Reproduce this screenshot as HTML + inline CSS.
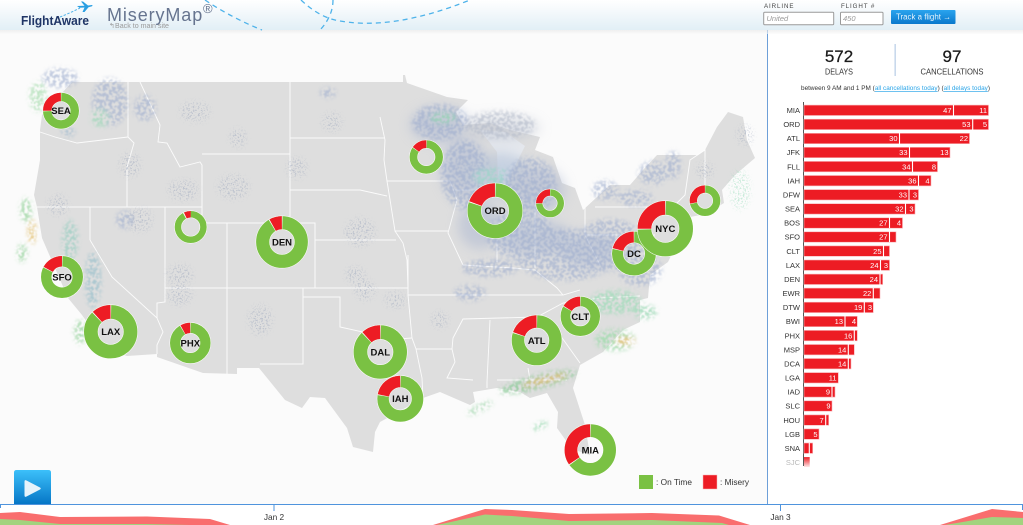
<!DOCTYPE html>
<html><head><meta charset="utf-8"><title>MiseryMap</title>
<style>
html,body{margin:0;padding:0;background:#fff;width:1023px;height:525px;overflow:hidden}
svg{display:block;font-family:"Liberation Sans",sans-serif}
.st{fill:none;stroke:#fff;stroke-width:.9;opacity:.9}
.d circle{fill:none}
.o{stroke:#fff}.g{stroke:#7ac143}.r{stroke:#ed1c24}.s{stroke:#fff}
.d text{font-size:9.5px;font-weight:700;fill:#111;text-anchor:middle}
.l{font-size:7.5px;fill:#333;text-anchor:end}
.v{font-size:7.5px;fill:#fff;text-anchor:end}
.b{fill:#ed1c24;stroke:#f9b5b8;stroke-width:.6}
.dv{stroke:#fff;stroke-width:1.1}
.arc{fill:none;stroke:#4fb3ea;stroke-width:1.3;stroke-dasharray:5 4}
</style></head><body>
<svg width="1023" height="525" viewBox="0 0 1023 525" xmlns="http://www.w3.org/2000/svg">
<defs>
<linearGradient id="hd" x1="0" y1="0" x2="0" y2="1"><stop offset="0" stop-color="#fff"/><stop offset="1" stop-color="#e2eff6"/></linearGradient>
<linearGradient id="sh" x1="0" y1="0" x2="0" y2="1"><stop offset="0" stop-color="#e8e8e8"/><stop offset="1" stop-color="#fbfbfb"/></linearGradient>
<linearGradient id="pl" x1="0" y1="0" x2="0" y2="1"><stop offset="0" stop-color="#3cc0fa"/><stop offset="1" stop-color="#0676c6"/></linearGradient>
<linearGradient id="btn" x1="0" y1="0" x2="0" y2="1"><stop offset="0" stop-color="#2aa4ee"/><stop offset="1" stop-color="#0a78cc"/></linearGradient>
<linearGradient id="fade" x1="0" y1="0" x2="0" y2="1"><stop offset="0" stop-color="#ed1c24"/><stop offset="1" stop-color="#ed1c24" stop-opacity=".1"/></linearGradient>
<filter id="mot" x="-10%" y="-10%" width="120%" height="120%">
<feGaussianBlur in="SourceGraphic" stdDeviation="2.5" result="b"/>
<feTurbulence type="fractalNoise" baseFrequency=".32" numOctaves="3" seed="4" result="n"/>
<feColorMatrix in="n" type="matrix" values="0 0 0 0 0 0 0 0 0 0 0 0 0 0 0 0 0 0 7 -3" result="m"/>
<feComposite in="b" in2="m" operator="in" result="c"/>
<feGaussianBlur in="c" stdDeviation=".45"/>
</filter>
<filter id="spk" x="-10%" y="-10%" width="120%" height="120%">
<feGaussianBlur in="SourceGraphic" stdDeviation="3" result="b"/>
<feTurbulence type="fractalNoise" baseFrequency=".6" numOctaves="2" seed="9" result="n"/>
<feColorMatrix in="n" type="matrix" values="0 0 0 0 0 0 0 0 0 0 0 0 0 0 0 0 0 0 10 -5.4" result="m"/>
<feComposite in="b" in2="m" operator="in" result="c"/>
<feGaussianBlur in="c" stdDeviation=".35"/>
</filter>
<filter id="soft" x="-20%" y="-20%" width="140%" height="140%"><feGaussianBlur stdDeviation="6"/></filter>
</defs>

<rect width="1023" height="525" fill="#fff"/>
<rect x="0" y="30" width="767" height="474" fill="#fbfbfb"/>

<!-- US land -->
<path fill="#dedede" d="M72 82H403V75L405 75L407 83L447 97L468 100L456 112L463 125L490 123L510 130L540 137L535 150L553 157L562 183L575 188L583 210L610 185L630 185L643 170L657 155H698L705 150L717 127L728 112L743 117L747 140L755 158L735 175L722 190L724 203L706 214L690 217L681 235L668 262L650 275L648 298L640 300L640 322L623 330L603 352L580 365L573 388L585 425L590 455L575 450L567 442L557 428L558 412L547 393L530 398L520 392L497 388L473 392L475 402L470 405L440 392L423 398L380 422L375 432L373 452L353 447L347 428L325 398L310 397L302 408L285 400L259 368H237V374L203 373L157 357V354L127 356L107 350L82 315L68 298L55 268L42 238L37 207L34 195L40 160L40 130L42 115Z"/>
<!-- Great lakes pale wash -->
<path fill="#e6e9ee" d="M480 130L497 152L498 178L507 188L512 172L525 146L505 132Z"/>

<!-- states -->
<g class="st">
<path d="M40 132L55 137L77 143L128 137V82"/>
<path d="M128 137L134 143L127 167V207"/>
<path d="M140 82L160 125L158 142L167 143L180 167L200 162L202 165V207"/>
<path d="M202 154H290V82"/>
<path d="M290 154V223"/>
<path d="M290 138H385"/>
<path d="M290 190H360L387 196"/>
<path d="M202 223H315V288"/>
<path d="M315 240H396"/>
<path d="M37 207H202V223"/>
<path d="M90 207V240M90 240L112 277L157 318L163 332L157 345V354"/>
<path d="M165 207V302L157 303V318"/>
<path d="M165 288H408"/>
<path d="M227 223V374"/>
<path d="M303 288V364H260"/>
<path d="M303 297H340V327L363 332L385 340L412 338"/>
<path d="M408 255V295H563L580 290"/>
<path d="M408 295L412 338L416 349L422 378L423 398"/>
<path d="M416 349H452L455 362L447 378L473 380"/>
<path d="M452 349L453 338L463 319L537 317L563 303L600 298L640 296"/>
<path d="M490 320L487 382V388"/>
<path d="M528 368L530 380M497 380H567"/>
<path d="M560 335L580 363"/>
<path d="M380 117L385 140L384 160L387 181H450"/>
<path d="M387 181L395 231H448"/>
<path d="M395 231L403 243L407 260L408 288"/>
<path d="M450 181L457 200L448 233L463 265"/>
<path d="M455 190H495"/>
<path d="M497 240V262"/>
<path d="M463 265L513 268L535 270L557 288L563 295"/>
<path d="M535 205V268"/>
<path d="M585 207V235L600 265"/>
<path d="M595 207H673"/>
<path d="M585 235H655"/>
<path d="M673 207L685 195L690 160L705 150V190"/>
</g>

<!-- radar soft wash -->
<g filter="url(#soft)" opacity=".5">
<ellipse cx="440" cy="125" rx="30" ry="18" fill="#aab6d0"/>
<ellipse cx="500" cy="128" rx="40" ry="12" fill="#c2c8d4"/>
<ellipse cx="465" cy="170" rx="24" ry="30" fill="#aab6d0"/>
<ellipse cx="500" cy="175" rx="30" ry="22" fill="#a8bad4"/>
<ellipse cx="480" cy="225" rx="22" ry="24" fill="#aab6d0"/>
<ellipse cx="535" cy="190" rx="30" ry="24" fill="#aab6d0"/>
<ellipse cx="535" cy="238" rx="38" ry="18" fill="#a8b6d2"/>
<ellipse cx="590" cy="250" rx="32" ry="18" fill="#a8b6d2"/>
</g>
<g filter="url(#mot)" opacity=".6">
<ellipse cx="440" cy="122" rx="28" ry="18" fill="#9cacce"/>
<ellipse cx="443" cy="118" rx="13" ry="6" fill="#86d4a8"/>
<ellipse cx="500" cy="125" rx="35" ry="14" fill="#b0b8c8"/>
<ellipse cx="465" cy="175" rx="24" ry="35" fill="#9cacce"/>
<ellipse cx="493" cy="177" rx="20" ry="9" fill="#8fd8c4"/>
<ellipse cx="530" cy="185" rx="26" ry="28" fill="#9cacce"/>
<ellipse cx="520" cy="235" rx="34" ry="24" fill="#9cacce"/>
<ellipse cx="565" cy="255" rx="50" ry="26" fill="#9cacce"/>
<ellipse cx="610" cy="245" rx="34" ry="26" fill="#9cacce"/>
<ellipse cx="640" cy="270" rx="22" ry="16" fill="#9cacce"/>
<ellipse cx="490" cy="268" rx="28" ry="9" fill="#9cacce"/>
<ellipse cx="470" cy="293" rx="16" ry="8" fill="#9cacce"/>
<ellipse cx="605" cy="190" rx="13" ry="10" fill="#9cacce"/>
<ellipse cx="653" cy="173" rx="15" ry="12" fill="#9cacce"/>
<ellipse cx="673" cy="165" rx="8" ry="14" fill="#9cacce"/>
<ellipse cx="635" cy="198" rx="18" ry="8" fill="#9cacce"/>
<ellipse cx="60" cy="78" rx="18" ry="10" fill="#9cacce"/>
<ellipse cx="38" cy="97" rx="9" ry="15" fill="#9cd8a4"/>
<ellipse cx="110" cy="102" rx="18" ry="24" fill="#9cacce"/>
<ellipse cx="100" cy="118" rx="9" ry="9" fill="#8fd6b0"/>
<ellipse cx="145" cy="108" rx="11" ry="13" fill="#9cacce"/>
<ellipse cx="68" cy="132" rx="7" ry="5" fill="#98b5cc"/>
<ellipse cx="328" cy="93" rx="8" ry="5" fill="#9cacce"/>
<ellipse cx="70" cy="240" rx="8" ry="20" fill="#8ccabc"/>
<ellipse cx="93" cy="280" rx="8" ry="28" fill="#8cbac8"/>
<ellipse cx="125" cy="220" rx="9" ry="9" fill="#9cacce"/>
</g>
<g filter="url(#mot)" opacity=".85">
<ellipse cx="615" cy="302" rx="26" ry="12" fill="#a4dcbc"/>
<ellipse cx="645" cy="312" rx="12" ry="7" fill="#a4dcbc"/>
<ellipse cx="615" cy="340" rx="20" ry="11" fill="#a4dcb0"/>
<ellipse cx="625" cy="341" rx="10" ry="4" fill="#e4bd6e"/>
<ellipse cx="538" cy="382" rx="40" ry="7" fill="#90cc9c" transform="rotate(-14 538 382)"/>
<ellipse cx="545" cy="380" rx="24" ry="3" fill="#e4b866" transform="rotate(-14 545 380)"/>
<ellipse cx="480" cy="408" rx="14" ry="3.5" fill="#a4d8b0" transform="rotate(-25 480 408)"/>
<ellipse cx="540" cy="426" rx="8" ry="3" fill="#8ed6a8" transform="rotate(-25 540 426)"/>
<ellipse cx="26" cy="210" rx="6" ry="12" fill="#a3d8a8"/>
<ellipse cx="32" cy="232" rx="4" ry="12" fill="#e2c070"/>
<ellipse cx="22" cy="253" rx="5" ry="9" fill="#a3d8a8"/>
<ellipse cx="80" cy="332" rx="6" ry="12" fill="#a3d8a8"/>
</g>
<!-- faint speck clusters -->
<g filter="url(#spk)" opacity=".45" fill="#9aa5bc">
<ellipse cx="195" cy="112" rx="15" ry="10"/><ellipse cx="238" cy="138" rx="8" ry="9"/><ellipse cx="233" cy="187" rx="16" ry="12"/>
<ellipse cx="332" cy="122" rx="10" ry="9"/><ellipse cx="297" cy="168" rx="10" ry="10"/><ellipse cx="360" cy="232" rx="15" ry="14"/>
<ellipse cx="183" cy="190" rx="15" ry="10"/><ellipse cx="58" cy="205" rx="10" ry="10"/><ellipse cx="260" cy="320" rx="12" ry="15"/>
<ellipse cx="180" cy="295" rx="12" ry="10"/><ellipse cx="365" cy="290" rx="10" ry="10"/><ellipse cx="395" cy="300" rx="10" ry="8"/>
<ellipse cx="355" cy="275" rx="10" ry="8"/><ellipse cx="440" cy="320" rx="8" ry="8"/><ellipse cx="745" cy="135" rx="8" ry="10"/>
<ellipse cx="705" cy="170" rx="8" ry="8"/><ellipse cx="740" cy="190" rx="10" ry="20" fill="#8ed8b4"/>
<ellipse cx="140" cy="220" rx="12" ry="12"/><ellipse cx="180" cy="275" rx="13" ry="10"/><ellipse cx="130" cy="165" rx="10" ry="12"/>
</g>

<!-- donuts: outline, green, separator, red -->
<g class="d">
<g transform="translate(61,110.7)"><circle r="13.75" class="o" stroke-width="9.5"/><circle r="13.75" class="g" stroke-width="8.5"/><circle r="13.75" class="s" stroke-width="8.5" pathLength="100" stroke-dasharray="26 100" transform="rotate(-182)"/><circle r="13.75" class="r" stroke-width="8.5" pathLength="100" stroke-dasharray="25 100" transform="rotate(-180)"/><text y="3.5">SEA</text></g>
<g transform="translate(190.7,227)"><circle r="12.75" class="o" stroke-width="7.5"/><circle r="12.75" class="g" stroke-width="6.5"/><circle r="12.75" class="s" stroke-width="6.5" pathLength="100" stroke-dasharray="8 100" transform="rotate(-119)"/><circle r="12.75" class="r" stroke-width="6.5" pathLength="100" stroke-dasharray="7 100" transform="rotate(-115)"/></g>
<g transform="translate(282,242)"><circle r="19.3" class="o" stroke-width="14.2"/><circle r="19.3" class="g" stroke-width="13.2"/><circle r="19.3" class="s" stroke-width="13.2" pathLength="100" stroke-dasharray="9 100" transform="rotate(-121)"/><circle r="19.3" class="r" stroke-width="13.2" pathLength="100" stroke-dasharray="8 100" transform="rotate(-119)"/><text y="3.5">DEN</text></g>
<g transform="translate(62,277)"><circle r="15.75" class="o" stroke-width="11.5"/><circle r="15.75" class="g" stroke-width="10.5"/><circle r="15.75" class="s" stroke-width="10.5" pathLength="100" stroke-dasharray="18 100" transform="rotate(-153)"/><circle r="15.75" class="r" stroke-width="10.5" pathLength="100" stroke-dasharray="17 100" transform="rotate(-151)"/><text y="3.5">SFO</text></g>
<g transform="translate(110.7,331.7)"><circle r="19.85" class="o" stroke-width="14.7"/><circle r="19.85" class="g" stroke-width="13.7"/><circle r="19.85" class="s" stroke-width="13.7" pathLength="100" stroke-dasharray="12.6 100" transform="rotate(-134)"/><circle r="19.85" class="r" stroke-width="13.7" pathLength="100" stroke-dasharray="11.6 100" transform="rotate(-132)"/><text y="3.5">LAX</text></g>
<g transform="translate(190.3,343)"><circle r="15.15" class="o" stroke-width="11.3"/><circle r="15.15" class="g" stroke-width="10.3"/><circle r="15.15" class="s" stroke-width="10.3" pathLength="100" stroke-dasharray="9 100" transform="rotate(-121)"/><circle r="15.15" class="r" stroke-width="10.3" pathLength="100" stroke-dasharray="8 100" transform="rotate(-119)"/><text y="3.5">PHX</text></g>
<g transform="translate(426.3,157)"><circle r="12.85" class="o" stroke-width="8.7"/><circle r="12.85" class="g" stroke-width="7.7"/><circle r="12.85" class="s" stroke-width="7.7" pathLength="100" stroke-dasharray="16 100" transform="rotate(-146)"/><circle r="12.85" class="r" stroke-width="7.7" pathLength="100" stroke-dasharray="15 100" transform="rotate(-144)"/></g>
<g transform="translate(495,210.7)"><circle r="20.75" class="o" stroke-width="14.5"/><circle r="20.75" class="g" stroke-width="13.5"/><circle r="20.75" class="s" stroke-width="13.5" pathLength="100" stroke-dasharray="20.5 100" transform="rotate(-162)"/><circle r="20.75" class="r" stroke-width="13.5" pathLength="100" stroke-dasharray="19.5 100" transform="rotate(-160)"/><text y="3.5">ORD</text></g>
<g transform="translate(550,203.3)"><circle r="10.75" class="o" stroke-width="7.5"/><circle r="10.75" class="g" stroke-width="6.5"/><circle r="10.75" class="s" stroke-width="6.5" pathLength="100" stroke-dasharray="26 100" transform="rotate(-182)"/><circle r="10.75" class="r" stroke-width="6.5" pathLength="100" stroke-dasharray="25 100" transform="rotate(-180)"/></g>
<g transform="translate(705,200.7)"><circle r="11.65" class="o" stroke-width="8.3"/><circle r="11.65" class="g" stroke-width="7.3"/><circle r="11.65" class="s" stroke-width="7.3" pathLength="100" stroke-dasharray="29 100" transform="rotate(-193)"/><circle r="11.65" class="r" stroke-width="7.3" pathLength="100" stroke-dasharray="28 100" transform="rotate(-191)"/></g>
<g transform="translate(634,253.5)"><circle r="16.5" class="o" stroke-width="12"/><circle r="16.5" class="g" stroke-width="11"/><circle r="16.5" class="s" stroke-width="11" pathLength="100" stroke-dasharray="22 100" transform="rotate(-168)"/><circle r="16.5" class="r" stroke-width="11" pathLength="100" stroke-dasharray="21 100" transform="rotate(-166)"/><text y="3.5">DC</text></g>
<g transform="translate(665.3,228.7)"><circle r="20.85" class="o" stroke-width="14.7"/><circle r="20.85" class="g" stroke-width="13.7"/><circle r="20.85" class="s" stroke-width="13.7" pathLength="100" stroke-dasharray="26 100" transform="rotate(-182)"/><circle r="20.85" class="r" stroke-width="13.7" pathLength="100" stroke-dasharray="25 100" transform="rotate(-180)"/><text y="3.5">NYC</text></g>
<g transform="translate(380.3,352)"><circle r="19.85" class="o" stroke-width="14.7"/><circle r="19.85" class="g" stroke-width="13.7"/><circle r="19.85" class="s" stroke-width="13.7" pathLength="100" stroke-dasharray="12.7 100" transform="rotate(-134)"/><circle r="19.85" class="r" stroke-width="13.7" pathLength="100" stroke-dasharray="11.7 100" transform="rotate(-132)"/><text y="3.5">DAL</text></g>
<g transform="translate(400.3,398.7)"><circle r="17.25" class="o" stroke-width="12.5"/><circle r="17.25" class="g" stroke-width="11.5"/><circle r="17.25" class="s" stroke-width="11.5" pathLength="100" stroke-dasharray="23 100" transform="rotate(-171)"/><circle r="17.25" class="r" stroke-width="11.5" pathLength="100" stroke-dasharray="22 100" transform="rotate(-169)"/><text y="3.5">IAH</text></g>
<g transform="translate(536.7,340.3)"><circle r="18.75" class="o" stroke-width="13.5"/><circle r="18.75" class="g" stroke-width="12.5"/><circle r="18.75" class="s" stroke-width="12.5" pathLength="100" stroke-dasharray="20.7 100" transform="rotate(-163)"/><circle r="18.75" class="r" stroke-width="12.5" pathLength="100" stroke-dasharray="19.7 100" transform="rotate(-161)"/><text y="3.5">ATL</text></g>
<g transform="translate(580.3,316.3)"><circle r="14.85" class="o" stroke-width="10.7"/><circle r="14.85" class="g" stroke-width="9.7"/><circle r="14.85" class="s" stroke-width="9.7" pathLength="100" stroke-dasharray="17 100" transform="rotate(-150)"/><circle r="14.85" class="r" stroke-width="9.7" pathLength="100" stroke-dasharray="16 100" transform="rotate(-148)"/><text y="3.5">CLT</text></g>
<g transform="translate(590.3,450)"><circle r="19.35" class="o" stroke-width="13.7"/><circle r="19.35" class="g" stroke-width="12.7"/><circle r="19.35" class="s" stroke-width="12.7" pathLength="100" stroke-dasharray="35.5 100" transform="rotate(-216)"/><circle r="19.35" class="r" stroke-width="12.7" pathLength="100" stroke-dasharray="34.5 100" transform="rotate(-214)"/><text y="3.5">MIA</text></g>
</g>

<!-- legend -->
<rect x="639" y="475" width="14" height="14" fill="#7ac143"/>
<text x="656" y="485" font-size="8.3" fill="#333">: On Time</text>
<rect x="703" y="475" width="14" height="14" fill="#ed1c24" stroke="#f9b5b8" stroke-width=".5"/>
<text x="720" y="485" font-size="8.3" fill="#333">: Misery</text>

<!-- right panel -->
<rect x="768" y="30" width="255" height="474" fill="#fff"/>
<rect x="767" y="30" width="1" height="474" fill="#6d9fd8"/>
<text x="839" y="62" font-size="17" fill="#1a1a1a" stroke="#1a1a1a" stroke-width=".25" text-anchor="middle">572</text>
<text x="839" y="74.5" font-size="8.5" fill="#333" text-anchor="middle" textLength="28" lengthAdjust="spacingAndGlyphs">DELAYS</text>
<rect x="894.5" y="44" width="1.3" height="32" fill="#bcd0e8"/>
<text x="952" y="62" font-size="17" fill="#1a1a1a" stroke="#1a1a1a" stroke-width=".25" text-anchor="middle">97</text>
<text x="952" y="74.5" font-size="8.5" fill="#333" text-anchor="middle" textLength="63" lengthAdjust="spacingAndGlyphs">CANCELLATIONS</text>
<text x="801" y="90" font-size="6.8" fill="#333" textLength="189" lengthAdjust="spacingAndGlyphs">between 9 AM and 1 PM (<tspan fill="#2ba5e8" text-decoration="underline">all cancellations today</tspan>) (<tspan fill="#2ba5e8" text-decoration="underline">all delays today</tspan>)</text>

<!-- bars -->
<rect x="803" y="102" width="1" height="364" fill="#555"/>
<g class="l">
<text x="800" y="113">MIA</text><text x="800" y="127.1">ORD</text><text x="800" y="141.2">ATL</text><text x="800" y="155.2">JFK</text><text x="800" y="169.3">FLL</text><text x="800" y="183.4">IAH</text><text x="800" y="197.5">DFW</text><text x="800" y="211.6">SEA</text><text x="800" y="225.7">BOS</text><text x="800" y="239.7">SFO</text><text x="800" y="253.8">CLT</text><text x="800" y="267.9">LAX</text><text x="800" y="282">DEN</text><text x="800" y="296">EWR</text><text x="800" y="310.1">DTW</text><text x="800" y="324.2">BWI</text><text x="800" y="338.3">PHX</text><text x="800" y="352.4">MSP</text><text x="800" y="366.4">DCA</text><text x="800" y="380.5">LGA</text><text x="800" y="394.6">IAD</text><text x="800" y="408.7">SLC</text><text x="800" y="422.8">HOU</text><text x="800" y="436.8">LGB</text><text x="800" y="450.9">SNA</text><text x="800" y="465" opacity=".35">SJC</text>
</g>
<g>
<rect class="b" x="804" y="105.1" width="184.5" height="10.4"/><rect class="b" x="804" y="119.2" width="184.5" height="10.4"/><rect class="b" x="804" y="133.3" width="165.5" height="10.4"/><rect class="b" x="804" y="147.3" width="146" height="10.4"/><rect class="b" x="804" y="161.4" width="133.5" height="10.4"/><rect class="b" x="804" y="175.5" width="127" height="10.4"/><rect class="b" x="804" y="189.6" width="114.5" height="10.4"/><rect class="b" x="804" y="203.7" width="111" height="10.4"/><rect class="b" x="804" y="217.8" width="98.5" height="10.4"/><rect class="b" x="804" y="231.8" width="92" height="10.4"/><rect class="b" x="804" y="245.9" width="85.5" height="10.4"/><rect class="b" x="804" y="260" width="85.5" height="10.4"/><rect class="b" x="804" y="274.1" width="78.7" height="10.4"/><rect class="b" x="804" y="288.1" width="76" height="10.4"/><rect class="b" x="804" y="302.2" width="69.3" height="10.4"/><rect class="b" x="804" y="316.3" width="53.3" height="10.4"/><rect class="b" x="804" y="330.4" width="53.3" height="10.4"/><rect class="b" x="804" y="344.5" width="50.3" height="10.4"/><rect class="b" x="804" y="358.5" width="47" height="10.4"/><rect class="b" x="804" y="372.6" width="34.3" height="10.4"/><rect class="b" x="804" y="386.7" width="31" height="10.4"/><rect class="b" x="804" y="400.8" width="28" height="10.4"/><rect class="b" x="804" y="414.9" width="24.7" height="10.4"/><rect class="b" x="804" y="428.9" width="15" height="10.4"/><rect class="b" x="804" y="443" width="8.7" height="10.4"/>
<rect x="804" y="457.1" width="5.7" height="10" fill="url(#fade)"/>
</g>
<g class="dv">
<path d="M953.5 105V116M972.7 119V130M899.5 133V144M909.5 147V158M912.5 161V172M918.5 175V186M909 189V200M905.5 203V214M889.5 217V228M889.5 231V242M883.5 245V257M880.5 260V271M880 274V285M873.3 288V299M864.3 302V313M845 316V327M854.3 330V341M848.3 344V355M848.3 358V369M832 386V397M825.7 414V426M809.3 443V454"/>
</g>
<g class="v">
<text x="951.5" y="113">47</text><text x="987" y="113">11</text>
<text x="970.5" y="127.1">53</text><text x="987" y="127.1">5</text>
<text x="897.5" y="141.2">30</text><text x="968" y="141.2">22</text>
<text x="907.5" y="155.2">33</text><text x="948.5" y="155.2">13</text>
<text x="910.5" y="169.3">34</text><text x="936" y="169.3">8</text>
<text x="916.5" y="183.4">36</text><text x="929.5" y="183.4">4</text>
<text x="907" y="197.5">33</text><text x="917" y="197.5">3</text>
<text x="903.5" y="211.6">32</text><text x="913.5" y="211.6">3</text>
<text x="887.5" y="225.7">27</text><text x="901" y="225.7">4</text>
<text x="887.5" y="239.7">27</text>
<text x="881.5" y="253.8">25</text>
<text x="878.5" y="267.9">24</text><text x="888" y="267.9">3</text>
<text x="878" y="282">24</text>
<text x="871.3" y="296">22</text>
<text x="862.3" y="310.1">19</text><text x="872" y="310.1">3</text>
<text x="843" y="324.2">13</text><text x="856" y="324.2">4</text>
<text x="852.3" y="338.3">16</text>
<text x="846.3" y="352.4">14</text>
<text x="846.3" y="366.4">14</text>
<text x="836.5" y="380.5">11</text>
<text x="830" y="394.6">9</text>
<text x="830.5" y="408.7">9</text>
<text x="823.7" y="422.8">7</text>
<text x="817.5" y="436.8">5</text>
</g>

<!-- timeline -->
<rect x="0" y="504" width="1023" height="21" fill="#fff"/>
<path fill="#f96e6e" d="M0 513L20 512L60 517L147 516.5L210 519L230 525H0ZM433 525L485 509L512 510L569 514L652 513L719 515.5L750 525ZM940 525L992 509L1023 512V525Z"/>
<path fill="#a2d37e" d="M0 519L20 520L60 524L147 524L190 525H0ZM437 525L485 514.5L512 516L569 521L652 520L722 523L729 525ZM945 525L992 517L1023 518V525Z"/>
<rect x="0" y="504" width="1023" height="1" fill="#4f94dd"/>
<path d="M.5 505V508M274 505V511M780.5 505V511M1022.5 505V510" stroke="#4f94dd" stroke-width="1" fill="none"/>
<text x="274" y="520" font-size="8.3" fill="#333" text-anchor="middle">Jan 2</text>
<text x="780.5" y="520" font-size="8.3" fill="#333" text-anchor="middle">Jan 3</text>

<!-- play -->
<path d="M14 504V472.5Q14 470 16.5 470H48.5Q51 470 51 472.5V504Z" fill="url(#pl)"/>
<path d="M24.5 481.5Q24.5 479.5 26.5 480.5L40 487.5Q41.5 488.5 40 489.5L26.5 496.5Q24.5 497.5 24.5 495.5Z" fill="#e6f3fb"/>

<!-- header -->
<rect x="0" y="30" width="1023" height="4" fill="url(#sh)" opacity=".6"/>
<rect x="0" y="0" width="1023" height="30" fill="url(#hd)"/>
<path class="arc" d="M205 0Q232 18 262 30"/>
<path class="arc" d="M301 0Q318 16 335 20Q390 32 470 0"/>
<path class="arc" d="M333 0Q333 16 320 30"/>
<path d="M60 17Q70 13 80 8" fill="none" stroke="#4fb3ea" stroke-width="1" stroke-dasharray="2.5 1.5"/>
<path d="M77 6L84.5 5.8L81 1.5H83L88 5.5L92 5Q93 5.5 92 6.2L88.5 7.2L84.5 12H82.5L84.5 7.5L79.5 7.8Z" fill="#2a9fe2"/>
<text x="21" y="25" font-size="12.6" font-weight="700" fill="#1f3566" textLength="68" lengthAdjust="spacingAndGlyphs">FlightAware</text>
<text x="107" y="21" font-size="18" fill="#66748f" letter-spacing=".9">MiseryMap</text>
<text x="203" y="13" font-size="13" fill="#66748f">®</text>
<text x="109" y="28" font-size="7.2" fill="#9a9a9a">↰</text><text x="115" y="28" font-size="7.2" fill="#9a9a9a" textLength="54" lengthAdjust="spacingAndGlyphs">Back to main site</text>

<text x="764" y="8" font-size="6.2" fill="#444" letter-spacing=".9">AIRLINE</text>
<text x="841" y="8" font-size="6.2" fill="#444" letter-spacing=".9">FLIGHT #</text>
<rect x="763.7" y="12.2" width="70" height="12.6" rx="1" fill="#fff" stroke="#9a9a9a"/>
<rect x="840.5" y="12.2" width="42.5" height="12.6" rx="1" fill="#fff" stroke="#9a9a9a"/>
<text x="766.5" y="21" font-size="7.5" font-style="italic" fill="#999">United</text>
<text x="843" y="21" font-size="7.5" font-style="italic" fill="#999">450</text>
<rect x="891" y="10" width="64.5" height="14" rx="1" fill="url(#btn)"/>
<text x="896" y="19.7" font-size="7.8" fill="#e6f4fc" textLength="55" lengthAdjust="spacingAndGlyphs">Track a flight →</text>
</svg>
</body></html>
